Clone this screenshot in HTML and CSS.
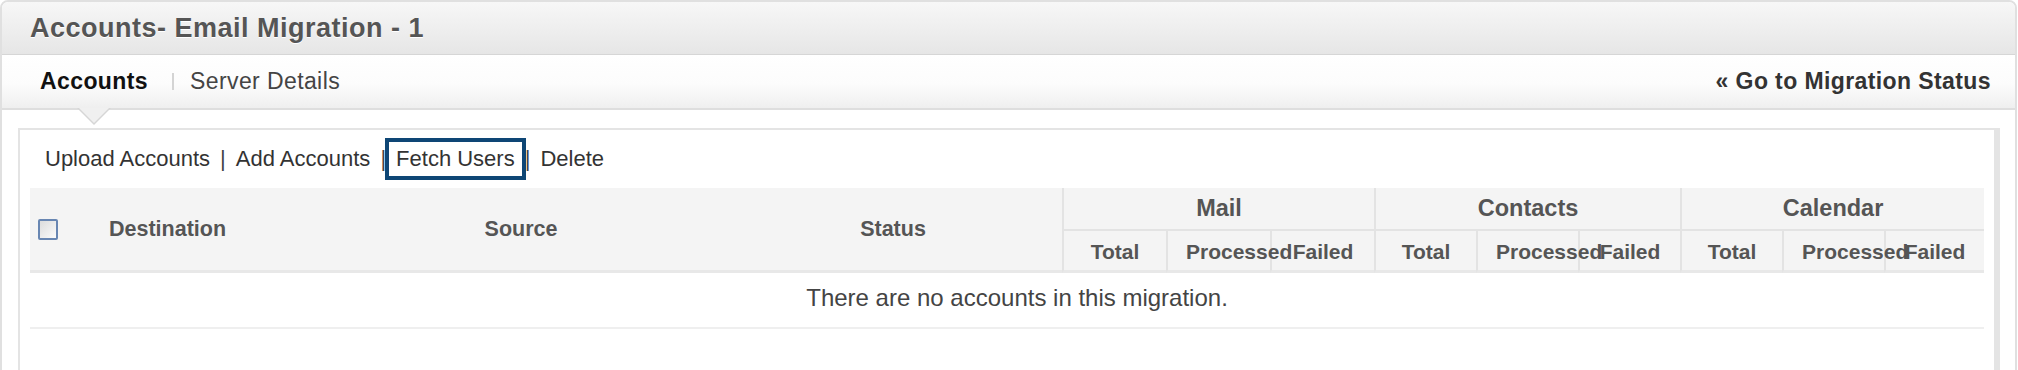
FILE: index.html
```html
<!DOCTYPE html>
<html>
<head>
    <meta charset="UTF-8">
    <meta name="viewport" content="width=device-width, initial-scale=1.0">
    <title>Accounts- Email Migration - 1</title>
    <link rel="stylesheet" href="styles.css">
</head>
<body>
    <div class="panel">
        <div class="panel-title">
            <h1>Accounts- Email Migration - 1</h1>
        </div>

        <div class="tab-bar">
            <a href="#" class="tab active">Accounts</a>
            <span class="tab-sep"></span>
            <a href="#" class="tab">Server Details</a>
            <a href="#" class="back-link">« Go to Migration Status</a>
        </div>

        <div class="panel-body">
            <div class="box">
                <div class="toolbar">
                    <a href="#">Upload Accounts</a>
                    <span class="sep">|</span>
                    <a href="#">Add Accounts</a>
                    <span class="sep">|</span>
                    <a href="#" class="highlight">Fetch Users</a>
                    <span class="sep">|</span>
                    <a href="#">Delete</a>
                </div>

                <table class="accounts-table">
                    <colgroup>
                        <col class="col-check">
                        <col class="col-dest">
                        <col class="col-source">
                        <col class="col-status">
                        <col class="col-wide"><col class="col-wide"><col class="col-wide">
                        <col class="col-num"><col class="col-num"><col class="col-num">
                        <col class="col-num"><col class="col-num"><col class="col-last">
                    </colgroup>
                    <thead>
                        <tr class="group-row">
                            <th rowspan="2" class="check-cell"><span class="checkbox"></span></th>
                            <th rowspan="2" class="dest">Destination</th>
                            <th rowspan="2">Source</th>
                            <th rowspan="2">Status</th>
                            <th colspan="3" class="group">Mail</th>
                            <th colspan="3" class="group">Contacts</th>
                            <th colspan="3" class="group">Calendar</th>
                        </tr>
                        <tr class="sub-row">
                            <th class="sub">Total</th>
                            <th class="sub">Processed</th>
                            <th class="sub">Failed</th>
                            <th class="sub">Total</th>
                            <th class="sub">Processed</th>
                            <th class="sub">Failed</th>
                            <th class="sub">Total</th>
                            <th class="sub">Processed</th>
                            <th class="sub">Failed</th>
                        </tr>
                    </thead>
                    <tbody>
                        <tr>
                            <td colspan="13" class="empty">There are no accounts in this migration.</td>
                        </tr>
                    </tbody>
                </table>
            </div>
        </div>
    </div>
</body>
</html>
```

FILE: styles.css
```css
* {
    margin: 0;
    padding: 0;
    box-sizing: border-box;
}

body {
    font-family: "Liberation Sans", Arial, sans-serif;
    background-color: #fff;
}

a {
    text-decoration: none;
}

.panel {
    margin-right: 1px;
    border: 2px solid #e0e0e0;
    border-radius: 8px 8px 0 0;
    background-color: #fff;
}

.panel-title {
    height: 53px;
    display: flex;
    align-items: center;
    padding-left: 28px;
    background: linear-gradient(#f7f7f7, #e6e6e6);
    border-bottom: 1px solid #d6d6d6;
    border-radius: 6px 6px 0 0;
}

.panel-title h1 {
    font-size: 27px;
    font-weight: bold;
    letter-spacing: 0.5px;
    color: #555;
    text-shadow: 0 1px 0 #fff;
}

.tab-bar {
    height: 55px;
    display: flex;
    align-items: stretch;
    padding: 0 24px 0 38px;
    background: linear-gradient(#fff 0%, #fcfcfc 55%, #efefef 100%);
    border-bottom: 2px solid #dedede;
    font-size: 23px;
    letter-spacing: 0.4px;
}

.tab {
    display: flex;
    align-items: center;
    color: #444;
}

.tab.active {
    position: relative;
    font-weight: bold;
    color: #111;
}

.tab.active::before,
.tab.active::after {
    content: "";
    position: absolute;
    left: 50%;
    width: 0;
    height: 0;
    border-style: solid;
    border-color: transparent;
}

.tab.active::before {
    top: 100%;
    margin-left: -17px;
    border-width: 17px 17px 0 17px;
    border-top-color: #d6d6d6;
}

.tab.active::after {
    top: 100%;
    margin-left: -15px;
    border-width: 15px 15px 0 15px;
    border-top-color: #f0f0f0;
}

.tab-sep {
    align-self: center;
    width: 2px;
    height: 17px;
    margin: 0 16px 0 24px;
    background-color: #d4d4d4;
}

.back-link {
    margin-left: auto;
    display: flex;
    align-items: center;
    font-weight: bold;
    color: #333;
}

.panel-body {
    padding: 18px 15px 0 16px;
}

.box {
    border: 2px solid #e4e4e4;
    border-right-width: 6px;
    border-bottom: none;
    padding: 0 10px 80px 10px;
}

.toolbar {
    height: 58px;
    display: flex;
    align-items: center;
    padding-left: 15px;
    font-size: 22px;
    color: #333;
}

.toolbar a {
    color: #333;
}

.toolbar .sep {
    padding: 0 10px;
    color: #444;
}

.toolbar .highlight {
    padding: 0 3px;
    margin: 0 -3px;
    outline: 4px solid #0e4675;
    outline-offset: 4px;
}

.accounts-table {
    width: 100%;
    table-layout: fixed;
    border-collapse: separate;
    border-spacing: 0;
}

.col-check { width: 60px; }
.col-dest { width: 228px; }
.col-source { width: 406px; }
.col-status { width: 338px; }
.col-wide { width: 104px; }
.col-num { width: 102px; }
.col-last { width: 100px; }

.accounts-table th {
    background-color: #f4f4f4;
    color: #555;
    font-size: 21.5px;
    font-weight: bold;
    text-align: center;
    vertical-align: middle;
    white-space: nowrap;
}

.group-row {
    height: 43px;
}

.sub-row {
    height: 42px;
}

.accounts-table th[rowspan] {
    border-bottom: 3px solid #e8e8e8;
}

.accounts-table th.check-cell {
    text-align: left;
    padding-left: 8px;
}

.accounts-table th.dest {
    text-align: left;
    padding-left: 19px;
}

.accounts-table th.group {
    font-size: 23.5px;
    border-left: 2px solid #e3e3e3;
    border-bottom: 2px solid #e3e3e3;
}

.accounts-table th.sub {
    font-size: 21px;
    padding: 2px 18px 0 18px;
    border-left: 2px solid #e3e3e3;
    border-bottom: 3px solid #e8e8e8;
}

.checkbox {
    display: inline-block;
    width: 20px;
    height: 21px;
    vertical-align: middle;
    border: 2px solid #6886b2;
    border-radius: 2px;
    background: linear-gradient(135deg, #dcdcdc, #fbfbfb);
}

.empty {
    height: 56px;
    padding: 0 0 4px 20px;
    text-align: center;
    vertical-align: middle;
    font-size: 24px;
    color: #444;
    border-bottom: 2px solid #efefef;
}
```
